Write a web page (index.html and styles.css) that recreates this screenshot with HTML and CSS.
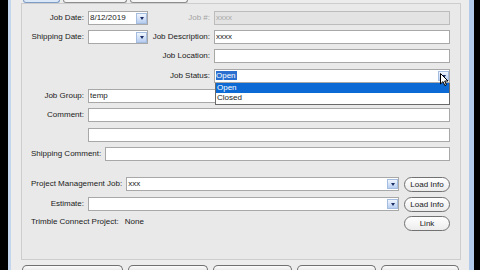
FILE: index.html
```html
<!DOCTYPE html>
<html>
<head>
<meta charset="utf-8">
<link rel="stylesheet" href="styles.css">
</head>
<body>
<div class="window">
  <div class="tabs">
    <span class="tab tab-active t1"></span>
    <span class="tab t2"></span>
    <span class="tab t3"></span>
  </div>
  <div class="panel">
    <div class="row">
      <span class="lbl l1">Job Date:</span>
      <div class="field date"><span class="txt">8/12/2019</span><span class="dd big"></span></div>
      <span class="lbl l2 dim">Job #:</span>
      <div class="field grow disabled"><span class="txt">xxxx</span></div>
    </div>
    <div class="row">
      <span class="lbl l1">Shipping Date:</span>
      <div class="field date"><span class="txt"></span><span class="dd big"></span></div>
      <span class="lbl l2">Job Description:</span>
      <div class="field grow"><span class="txt">xxxx</span></div>
    </div>
    <div class="row">
      <span class="skip"></span>
      <span class="lbl l2">Job Location:</span>
      <div class="field grow"><span class="txt"></span></div>
    </div>
    <div class="row mt1 top">
      <span class="skip"></span>
      <span class="lbl l2">Job Status:</span>
      <div class="field grow combo">
        <span class="txt"><span class="sel">Open</span></span>
        <span class="dd"></span>
        <div class="list">
          <div class="opt on">Open</div>
          <div class="opt">Closed</div>
        </div>
        <svg class="cursor" width="9" height="14" viewBox="0 0 9 14"><path d="M0.5 0.5 L0.5 11 L3 8.6 L4.8 12.6 L6.4 11.9 L4.7 8 L8 8 Z" fill="#fff" stroke="#000" stroke-width="1" stroke-linejoin="round"/></svg>
      </div>
    </div>
    <div class="row mt1">
      <span class="lbl l1">Job Group:</span>
      <div class="field grow"><span class="txt">temp</span></div>
    </div>
    <div class="row">
      <span class="lbl l1">Comment:</span>
      <div class="field grow"><span class="txt"></span></div>
    </div>
    <div class="row mt1">
      <span class="lbl l1"></span>
      <div class="field grow"><span class="txt"></span></div>
    </div>
    <div class="row">
      <span class="lbl">Shipping Comment:</span>
      <div class="field grow"><span class="txt"></span></div>
    </div>
    <div class="row sec">
      <span class="lbl">Project Management Job:</span>
      <div class="field grow"><span class="txt">xxx</span><span class="dd"></span></div>
      <button class="pill">Load Info</button>
    </div>
    <div class="row mt1">
      <span class="lbl l1">Estimate:</span>
      <div class="field grow"><span class="txt"></span><span class="dd"></span></div>
      <button class="pill">Load Info</button>
    </div>
    <div class="row last">
      <span class="lbl plain">Trimble Connect Project:</span>
      <span class="value">None</span>
      <button class="pill push">Link</button>
    </div>
  </div>
  <div class="btnrow">
    <span class="bbtn b1"></span>
    <span class="bbtn b2"></span>
    <span class="bbtn b3"></span>
    <span class="bbtn b4"></span>
    <span class="bbtn b5"></span>
  </div>
</div>
</body>
</html>
```

FILE: styles.css
```css
* { box-sizing: border-box; }
html, body { margin: 0; padding: 0; }
body {
  width: 480px;
  height: 270px;
  overflow: hidden;
  background: #000;
  font-family: "Liberation Sans", Arial, sans-serif;
  font-size: 8px;
  color: #1a1a1a;
}
.window {
  margin-left: 8px;
  width: 466px;
  height: 270px;
  overflow: hidden;
  border-left: 3px solid #c3d6ee;
  border-right: 5px solid #b2cbea;
  background: #ececec;
  padding-left: 10px;
}
.tabs {
  display: flex;
  gap: 3px;
  height: 3px;
  margin-left: 2px;
}
.tab {
  height: 3px;
  border: 1px solid #8e8e8e;
  border-top: none;
  border-radius: 0 0 3px 3px;
  background: #f6f6f6;
}
.tab-active { background: #dbe8f7; border-color: #7f9cc4; }
.t1 { width: 37px; }
.t2 { width: 64px; }
.t3 { width: 58px; }

.panel {
  width: 440px;
  height: 257px;
  border: 1px solid #cdcdcd;
  background: #e9e9e9;
  padding: 7px 10px 0 9px;
  display: flex;
  flex-direction: column;
  gap: 5px;
}
.row {
  display: flex;
  align-items: center;
  gap: 4px;
  height: 14px;
  position: relative;
}
.row.top { z-index: 3; }
.mt1 { margin-top: 1px; }
.sec { margin-top: 11px; }
.row.last { height: 15px; align-items: flex-start; }

.lbl { flex: none; text-align: right; white-space: nowrap; line-height: 12px; }
.l1 { width: 53px; }
.l2 { width: 58px; }
.skip { flex: none; width: 117px; }
.dim { color: #a3a3a3; }
.plain { line-height: 12px; padding-top: 0; }
.value { flex: none; margin-left: 2px; line-height: 12px; }

.field {
  flex: none;
  height: 14px;
  background: #fff;
  border: 1px solid #a8a8a8;
  display: flex;
  align-items: center;
  padding-left: 1px;
  position: relative;
}
.field .txt { flex: 1; line-height: 12px; white-space: nowrap; overflow: hidden; }
.date { width: 60px; }
.grow { flex: 1; min-width: 0; }
.disabled { background: #e3e3e3; border-color: #bcbcbc; color: #a9a9a9; }

.sel { background: #2a6fd0; color: #fff; padding: 0 1px; margin-left: -1px; }

.dd {
  flex: none;
  width: 11px;
  height: 10px;
  border: 1px solid #a4bce0;
  background: linear-gradient(#f1f6fe, #b7cdf0);
  display: flex;
  align-items: center;
  justify-content: center;
}
.dd.big { width: 11px; height: 11px; }
.dd::after {
  content: "";
  width: 0;
  height: 0;
  border-left: 2.5px solid transparent;
  border-right: 2.5px solid transparent;
  border-top: 3px solid #1c2e66;
}

.list {
  position: absolute;
  top: 13px;
  left: 0;
  right: -1px;
  height: 22px;
  background: #fff;
  border: 1px solid #6a6a6a;
  border-top: none;
}
.opt { height: 10px; line-height: 10px; padding-left: 1px; white-space: nowrap; }
.opt.on { background: #0d6ad5; color: #fff; }
.cursor { position: absolute; left: 225px; top: 3px; }

.pill {
  flex: none;
  width: 46px;
  height: 15px;
  margin: 0 0 0 1px;
  padding: 0;
  border: 1px solid #727272;
  border-radius: 8px;
  background: linear-gradient(#ffffff, #ececec);
  font-family: inherit;
  font-size: 8px;
  color: #1a1a1a;
  line-height: 13px;
  text-align: center;
}
.push { margin-left: auto; }

.btnrow {
  display: flex;
  gap: 5px;
  margin-top: 5px;
  margin-left: 1px;
}
.bbtn {
  height: 5px;
  border: 1px solid #707070;
  border-bottom: none;
  border-radius: 6px 6px 0 0;
  background: linear-gradient(#fbfbfb, #ebebeb);
}
.b1 { width: 101px; }
.b2 { width: 80px; }
.b3 { width: 79px; }
.b4 { width: 79px; }
.b5 { width: 78px; }
```
